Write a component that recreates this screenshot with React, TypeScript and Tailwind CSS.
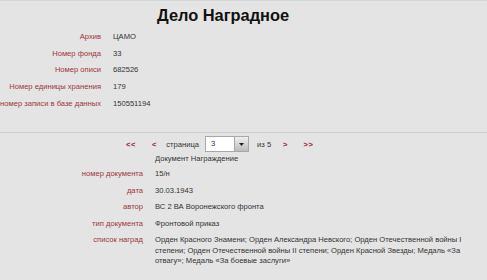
import React from "react";

const top = [
  ["Архив", "ЦАМО"],
  ["Номер фонда", "33"],
  ["Номер описи", "682526"],
  ["Номер единицы хранения", "179"],
  ["номер записи в базе данных", "150551194"],
];

const doc = [
  ["номер документа", "15/н"],
  ["дата", "30.03.1943"],
  ["автор", "ВС 2 ВА Воронежского фронта"],
  ["тип документа", "Фронтовой приказ"],
];

export default function App() {
  return (
    <div
      className="w-[487px] h-[280px] overflow-hidden bg-[#e4e4e4] border-t border-[#d3d9d9] text-[7.6px] text-[#333]"
      style={{ fontFamily: '"Liberation Sans", Arial, sans-serif' }}
    >
      <div className="h-[28px] pt-[4px] pl-[157px] text-[16.4px] leading-[20px] font-bold text-[#111]">
        Дело Наградное
      </div>
      <div className="grid grid-cols-[101px_1fr] gap-x-[12px]">
        {top.map(([l, v]) => (
          <React.Fragment key={l}>
            <div className="text-right text-[#a0343a] py-[3.2px] leading-[10.2px] whitespace-nowrap">{l}</div>
            <div className="py-[3.2px] leading-[10.2px]">{v}</div>
          </React.Fragment>
        ))}
      </div>
      <div className="mt-[20px] border-t border-[#cfcfcf]" />
      <div className="mt-[3px] h-[17px] flex items-center pl-[126px]">
        <span className="font-bold text-[#a0262c] tracking-[0.5px]">&lt;&lt;</span>
        <span className="ml-[16px] font-bold text-[#a0262c]">&lt;</span>
        <span className="ml-[10px]">страница</span>
        <div className="ml-[6px] flex h-[16px] w-[44px] border border-[#a8a8a8] bg-white">
          <div className="flex-1 pl-[5px] leading-[14px] text-[#1a2a5a]">3</div>
          <div className="w-[14px] border-l border-[#a8a8a8] bg-gradient-to-b from-[#f0f0f0] to-[#bcbcbc] flex items-center justify-center">
            <svg width="5" height="3" viewBox="0 0 5 3">
              <path d="M0 0H5L2.5 3Z" fill="#222" />
            </svg>
          </div>
        </div>
        <span className="ml-[8px]">из 5</span>
        <span className="ml-[12px] font-bold text-[#a0262c]">&gt;</span>
        <span className="ml-[16px] font-bold text-[#a0262c] tracking-[0.5px]">&gt;&gt;</span>
      </div>
      <div className="h-[11px] leading-[11px] mb-[2px] pl-[155px]">Документ Награждение</div>
      <div className="grid grid-cols-[143px_1fr] gap-x-[12px]">
        {doc.map(([l, v]) => (
          <React.Fragment key={l}>
            <div className="text-right text-[#a0343a] py-[3.2px] leading-[10.2px] whitespace-nowrap">{l}</div>
            <div className="py-[3.2px] leading-[10.2px]">{v}</div>
          </React.Fragment>
        ))}
        <div className="text-right text-[#a0343a] py-[3.2px] leading-[10.2px] whitespace-nowrap">список наград</div>
        <div className="py-[3.2px] leading-[10.2px] whitespace-nowrap">
          Орден Красного Знамени; Орден Александра Невского; Орден Отечественной войны I
          <br />
          степени; Орден Отечественной войны II степени; Орден Красной Звезды; Медаль «За
          <br />
          отвагу»; Медаль «За боевые заслуги»
        </div>
      </div>
    </div>
  );
}
